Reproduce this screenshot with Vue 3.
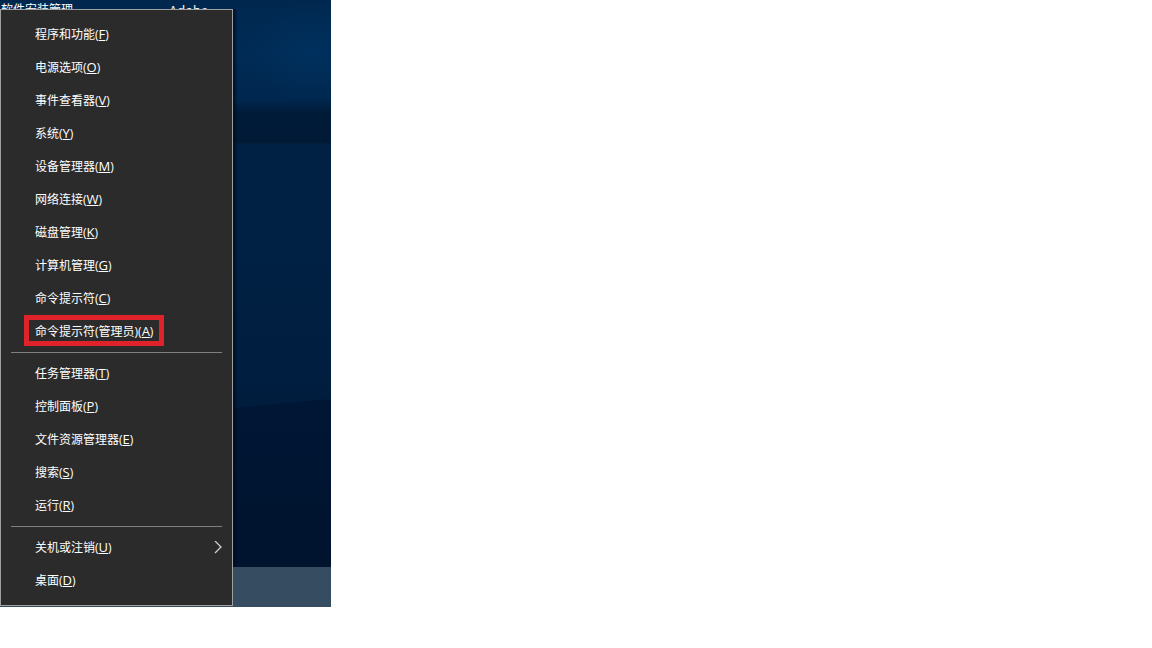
<script setup>
import { ref } from 'vue'

const groups = [
  [
    { label: '程序和功能', key: 'F' },
    { label: '电源选项', key: 'O' },
    { label: '事件查看器', key: 'V' },
    { label: '系统', key: 'Y' },
    { label: '设备管理器', key: 'M' },
    { label: '网络连接', key: 'W' },
    { label: '磁盘管理', key: 'K' },
    { label: '计算机管理', key: 'G' },
    { label: '命令提示符', key: 'C' },
    { label: '命令提示符(管理员)', key: 'A', marked: true },
  ],
  [
    { label: '任务管理器', key: 'T' },
    { label: '控制面板', key: 'P' },
    { label: '文件资源管理器', key: 'E' },
    { label: '搜索', key: 'S' },
    { label: '运行', key: 'R' },
  ],
  [
    { label: '关机或注销', key: 'U', submenu: true },
    { label: '桌面', key: 'D' },
  ],
]

const selected = ref('')
</script>

<template>
  <main class="desktop">
    <svg class="wallpaper" viewBox="0 0 331 607" preserveAspectRatio="none" aria-hidden="true">
      <defs>
        <linearGradient id="sky" x1="0" y1="0" x2="0" y2="1">
          <stop offset="0" stop-color="#00284f" />
          <stop offset="0.09" stop-color="#002b55" />
          <stop offset="0.165" stop-color="#00274e" />
          <stop offset="0.185" stop-color="#001b38" />
          <stop offset="0.235" stop-color="#001a36" />
          <stop offset="0.237" stop-color="#002143" />
          <stop offset="0.4" stop-color="#002144" />
          <stop offset="0.67" stop-color="#001d3e" />
        </linearGradient>
        <linearGradient id="floor" x1="0" y1="0" x2="0" y2="1">
          <stop offset="0" stop-color="#001635" />
          <stop offset="1" stop-color="#00132c" />
        </linearGradient>
        <radialGradient id="glow">
          <stop offset="0" stop-color="#003464" stop-opacity="0.6" />
          <stop offset="1" stop-color="#003464" stop-opacity="0" />
        </radialGradient>
        <linearGradient id="shade" x1="0" y1="0" x2="1" y2="0">
          <stop offset="0" stop-color="#000a1c" stop-opacity="0.8" />
          <stop offset="1" stop-color="#000a1c" stop-opacity="0" />
        </linearGradient>
      </defs>
      <rect width="331" height="607" fill="url(#sky)" />
      <ellipse cx="310" cy="52" rx="60" ry="50" fill="url(#glow)" />
      <path d="M0 432 L233 408 L331 399 V607 H0 Z" fill="url(#floor)" />
      <rect x="233" y="9" width="5" height="598" fill="url(#shade)" />
    </svg>

    <div class="taskbar"></div>

    <div class="content">
      <div class="shortcuts">
        <span class="shortcut">软件安装管理</span>
        <span class="shortcut adobe">Adobe</span>
      </div>

      <nav class="menu">
        <ul v-for="(group, i) in groups" :key="i" class="group">
          <li v-for="item in group" :key="item.key" class="row">
            <button
              type="button"
              class="item"
              :class="{ marked: item.marked }"
              @click="selected = item.key"
            >
              <span>{{ item.label }}(<u>{{ item.key }}</u>)</span>
              <svg v-if="item.submenu" class="arrow" width="8" height="14" viewBox="0 0 8 14">
                <path d="M1 0 L7 6 L1 12" />
              </svg>
            </button>
          </li>
        </ul>
      </nav>
    </div>
  </main>
</template>

<style>
body {
  margin: 0;
  background: #fff;
}
</style>

<style scoped>
.desktop {
  display: grid;
  width: max-content;
  overflow: hidden;
  font-family: "Open Sans", "Noto Sans CJK SC", sans-serif;
  font-size: 12px;
  color: #fff;
}
.wallpaper,
.taskbar,
.content {
  grid-area: 1 / 1;
}
.wallpaper {
  width: 100%;
  height: 100%;
  min-height: 0;
  contain: size;
}
.taskbar {
  align-self: end;
  height: 40px;
  background: #364c60;
}
.content {
  padding-right: 98px;
  padding-bottom: 1px;
}
/* the menu covers the lower part of the shortcut names */
.shortcuts {
  display: flex;
  height: 9px;
  padding-left: 1px;
  overflow: hidden;
  line-height: 20px;
}
.shortcut {
  width: 168px;
}
.adobe {
  width: 40px;
  font-size: 13px;
}
.menu {
  box-sizing: border-box;
  width: 233px;
  padding: 8px 0;
  background: #2b2b2b;
  border: 1px solid #a0a0a0;
}
.group {
  margin: 0;
  padding: 0;
  list-style: none;
}
.group + .group::before {
  content: "";
  display: block;
  height: 1px;
  margin: 4px 10px;
  background: #808080;
}
.row {
  display: flex;
  height: 33px;
}
.item {
  display: flex;
  flex: 1;
  align-items: center;
  justify-content: space-between;
  padding: 0 10px 0 34px;
  background: none;
  border: 0;
  color: inherit;
  font: inherit;
  line-height: 21px;
  text-align: left;
  white-space: nowrap;
}
.item:hover {
  background: #414141;
}
.item u {
  font-size: 13px;
  text-underline-offset: 1px;
}
.marked {
  box-sizing: border-box;
  flex: none;
  align-self: flex-start;
  height: 31px;
  margin-left: 23px;
  padding: 1px 6px 0 6px;
  border: 5px solid #e0222a;
}
.arrow {
  fill: none;
  stroke: #d0d0d0;
  stroke-width: 1.3;
}
</style>
